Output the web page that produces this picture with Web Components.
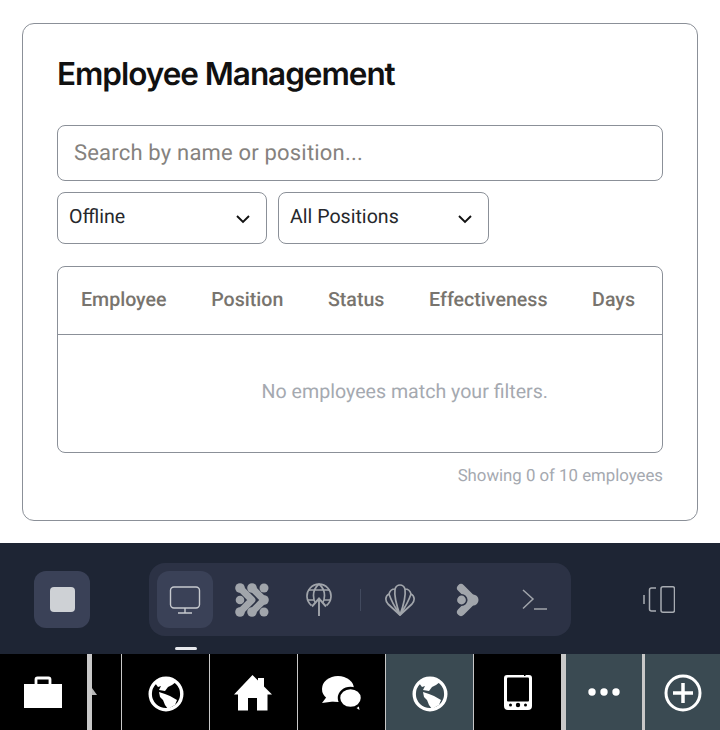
<!DOCTYPE html>
<html>
<head>
<meta charset="utf-8">
<style>
  html, body { margin: 0; padding: 0; background: #fff; }
  body { width: 720px; height: 730px; overflow: hidden; display: flex; flex-direction: column; font-family: Roboto, "Liberation Sans", sans-serif; text-rendering: geometricPrecision; }
</style>
</head>
<body>
<employee-panel></employee-panel>
<dock-bar></dock-bar>
<task-bar></task-bar>

<script>
class SelectBox extends HTMLElement {
  constructor() {
    super();
    this.attachShadow({ mode: "open" }).innerHTML = `
      <style>
        :host { display: flex; align-items: center; justify-content: space-between; box-sizing: border-box; width: 210px; height: 52px; padding: 0 15px 3px 11px; border: 1px solid #8b9098; border-radius: 8px; font-size: 19.6px; color: #26282c; }
        :host([wide]) { width: 211px; }
        svg { display: block; margin-top: 4px; }
      </style>
      <slot></slot>
      <svg width="16" height="10" viewBox="0 0 16 10"><path d="M2 2l6 6 6-6" fill="none" stroke="#111" stroke-width="1.9"/></svg>
    `;
  }
}

class EmployeeTable extends HTMLElement {
  constructor() {
    super();
    this.attachShadow({ mode: "open" }).innerHTML = `
      <style>
        :host { display: block; box-sizing: border-box; height: 187px; border: 1px solid #8b9098; border-radius: 8px; }
        .head { display: flex; justify-content: space-between; align-items: center; box-sizing: border-box; height: 68px; padding: 0 27px 2px 23px; border-bottom: 1px solid #8b9098; font-size: 19.6px; font-weight: 500; color: #78746e; }
        .empty { box-sizing: border-box; padding: 45px 114px 0 0; text-align: right; font-size: 19.6px; color: #a5a9b0; }
      </style>
      <div class="head"><span>Employee</span><span>Position</span><span>Status</span><span>Effectiveness</span><span>Days</span></div>
      <div class="empty">No employees match your filters.</div>
    `;
  }
}

class EmployeePanel extends HTMLElement {
  constructor() {
    super();
    this.attachShadow({ mode: "open" }).innerHTML = `
      <style>
        :host { display: block; box-sizing: border-box; height: 543px; padding: 23px 22px 22px; }
        .card { box-sizing: border-box; height: 498px; padding: 28px 34px 0; border: 1px solid #8b9098; border-radius: 12px; }
        h1 { margin: 0; font-family: Inter, Roboto, sans-serif; font-size: 31.5px; line-height: 44px; font-weight: 600; letter-spacing: -1.03px; color: #111; }
        .search { box-sizing: border-box; height: 56px; margin-top: 29px; padding: 0 16px; display: flex; align-items: center; border: 1px solid #8b9098; border-radius: 8px; font-size: 22px; letter-spacing: 0.19px; color: #85827e; }
        .filters { display: flex; gap: 11px; margin-top: 11px; }
        employee-table { margin-top: 22px; }
        .count { margin-top: 11px; text-align: right; font-size: 16.8px; line-height: 24px; color: #a5a9b0; }
      </style>
      <div class="card">
        <h1>Employee Management</h1>
        <div class="search">Search by name or position...</div>
        <div class="filters"><select-box>Offline</select-box><select-box wide>All Positions</select-box></div>
        <employee-table></employee-table>
        <div class="count">Showing 0 of 10 employees</div>
      </div>
    `;
  }
}

class DockBar extends HTMLElement {
  constructor() {
    super();
    this.attachShadow({ mode: "open" }).innerHTML = `
      <style>
        :host { display: flex; box-sizing: border-box; height: 111px; background: #1e2534; padding: 20px 45px 0 34px; position: relative; align-items: flex-start; }
        .tile { width: 56px; height: 57px; margin-top: 8px; border-radius: 12px; background: #3a4157; display: flex; align-items: center; justify-content: center; }
        .stop { width: 25px; height: 25px; border-radius: 4px; background: #ced1d5; }
        .group { display: flex; align-items: center; box-sizing: border-box; width: 422px; height: 73px; margin-left: 59px; padding: 0 8px; border-radius: 16px; background: #2c3245; }
        .item { width: 56px; height: 57px; display: flex; align-items: center; justify-content: center; margin-right: 11.4px; border-radius: 12px; }
        .item.on { background: #3a4157; }
        .item:last-child { margin-right: 0; }
        .sep { width: 1px; height: 22px; background: #424a5e; margin: 0 12px 0 1px; }
        .nudge { margin-right: 2px; }
        .right { margin-top: 23px; margin-left: auto; }
        svg { display: block; }
        .bar { position: absolute; left: 175px; top: 104px; width: 22px; height: 3px; border-radius: 2px; background: #e6e8ec; }
      </style>
      <div class="tile"><div class="stop"></div></div>
      <div class="group">
        <div class="item on">
          <svg width="32" height="28" viewBox="0 0 32 28" fill="none" stroke="#c6c9ce" stroke-width="1.4"><rect x="1.500" y="1" width="29" height="21" rx="3.500"/><path d="M16 22v5M9 27h14"/></svg>
        </div>
        <div class="item">
          <svg width="34" height="34" viewBox="0 0 34 34" fill="#a1a5ab"><circle cx="29" cy="5" r="4.500"/><circle cx="29" cy="29" r="4.500"/><circle cx="5" cy="17" r="4.300"/><path d="M5 5 17 17 5 29M17 5 29 17 17 29" fill="none" stroke="#a1a5ab" stroke-width="6.800" stroke-linejoin="round"/><circle cx="5" cy="5" r="4.800"/><circle cx="17" cy="5" r="4.800"/><circle cx="5" cy="29" r="4.800"/><circle cx="17" cy="29" r="4.800"/><circle cx="29" cy="17" r="4.800"/></svg>
        </div>
        <div class="item">
          <svg width="26" height="33" viewBox="0 0 26 33" fill="none" stroke="#a1a5ab" stroke-width="1.700"><path d="M5.500 22.500A12 12 0 1 1 20.500 22.500"/><path d="M13 1C9.500 4 7.500 8 7.500 12.500 7.500 15 8 18 9.500 20M13 1C16.500 4 18.500 8 18.500 12.500 18.500 15 18 18 16.500 20M2.500 7h21M1.500 17h7M17.500 17h7"/><path d="M13 15V33M6 23.500 13 15.500 20 23.500" stroke-width="1.900"/></svg>
        </div>
        <div class="sep"></div>
        <div class="item">
          <svg class="nudge" width="30" height="32" viewBox="0 0 30 32" fill="none" stroke="#a1a5ab" stroke-width="1.700" stroke-linejoin="round"><path d="M15 31 3 20C0 17 0 12 4 10 5 6 8 5 10 5 11 2 13 1 15 1S19 2 20 5C22 5 25 6 26 10 30 12 30 17 27 20Z"/><path d="M15 31C11 20 9 12 10 5M15 31C19 20 21 12 20 5M15 31C9 22 6 16 4 10M15 31C21 22 24 16 26 10"/></svg>
        </div>
        <div class="item">
          <svg width="23" height="34" viewBox="0 0 23 34" fill="#a1a5ab"><path d="M5 5 17 17 5 29" fill="none" stroke="#a1a5ab" stroke-width="8" stroke-linecap="round" stroke-linejoin="round"/><circle cx="17" cy="17" r="5.500"/><circle cx="5.500" cy="17" r="5.200" stroke="#2c3245" stroke-width="1.600"/></svg>
        </div>
        <div class="item">
          <svg class="nudge" width="25" height="21" viewBox="0 0 25 21" fill="none" stroke="#a1a5ab" stroke-width="1.500"><path d="M1 1l10 9-10 9.500M12 20h13"/></svg>
        </div>
      </div>
      <svg class="right" width="32" height="27" viewBox="0 0 32 27" fill="none" stroke="#a8acb2" stroke-width="1.500"><path d="M1 9v9"/><path d="M13 2H8.500Q6.500 2 6.500 4V23Q6.500 25 8.500 25H13"/><rect x="18" y="0.750" width="13.500" height="25.500" rx="2"/></svg>
      <div class="bar"></div>
    `;
  }
}

class TaskBar extends HTMLElement {
  constructor() {
    super();
    const globe = `<svg style="margin-top:4px" width="36" height="36" viewBox="0 0 36 36"><circle cx="18" cy="18" r="15.800" fill="none" stroke="#fff" stroke-width="3.400"/><path fill="#fff" d="M7 7 10 11 13 10 11 14 17 15 20 11 24 9 28 6 18 1Z"/><path fill="#fff" d="M11 16 17 18 22 20 29 24 27 29 20 33 17 29 15 24 12 21Z"/></svg>`;
    this.attachShadow({ mode: "open" }).innerHTML = `
      <style>
        :host { display: flex; height: 76px; background: #000; }
        .c { display: flex; align-items: center; justify-content: center; box-sizing: border-box; height: 76px; flex: none; }
        .slate { background: #3a4a52; }
        .thin { border-right: 1px solid #c8c8c8; }
        .thick { border-right: 5px solid #c8c8c8; }
        svg { display: block; }
      </style>
      <div class="c thick" style="width:92px">
        <svg style="margin-right:1px" width="38" height="32" viewBox="0 0 38 32" fill="#fff"><rect x="0" y="8" width="38" height="24"/><path d="M12 8V3.500Q12 2 13.500 2H24.500Q26 2 26 3.500V8" fill="none" stroke="#fff" stroke-width="2.800"/></svg>
      </div>
      <div class="c thin" style="width:30px;justify-content:flex-start">
        <svg width="5" height="8" viewBox="0 0 5 8" fill="#b8b8b8"><path d="M0 0 5 7H0Z"/></svg>
      </div>
      <div class="c thin" style="width:88px">${globe}</div>
      <div class="c thin" style="width:88px">
        <svg style="margin-top:1px;margin-right:2px" width="38" height="36" viewBox="0 0 38 36" fill="#fff"><path d="M18.500 0 24 5.500V3H30V11.500L38 19.500H33.500V35.500H23V23H14V35.500H4V19.500H0Z"/></svg>
      </div>
      <div class="c" style="width:87px">
        <svg style="margin-top:2px" width="40" height="34" viewBox="0 0 40 34" fill="#fff"><ellipse cx="16" cy="13" rx="16" ry="13"/><path d="M6 19 0 27 15 25Z"/><path d="M30 29 37.500 34 36 26Z"/><ellipse cx="28.500" cy="22" rx="11.500" ry="10" stroke="#000" stroke-width="2.500"/></svg>
      </div>
      <div class="c slate" style="width:89px;border-left:1px solid #c8c8c8;border-right:1px solid #c8c8c8">${globe}</div>
      <div class="c thick" style="width:92px">
        <svg width="30" height="37" viewBox="0 0 30 37" fill="none"><path fill="#fff" d="M4 1H21V2H22.500V1H26Q29 1 29 4V32Q29 36 25 36H5Q1 36 1 32V4Q1 1 4 1Z"/><rect x="4" y="3.500" width="22" height="24" rx="1" fill="#000"/><circle cx="7.500" cy="31" r="1.500" fill="#000"/><circle cx="15" cy="31" r="2.200" fill="#000"/><circle cx="22.500" cy="31" r="1.500" fill="#000"/></svg>
      </div>
      <div class="c slate" style="width:79px;border-right:3px solid #c8c8c8">
        <svg width="32" height="8" viewBox="0 0 32 8" fill="#fff"><circle cx="4" cy="4" r="3.700"/><circle cx="16" cy="4" r="3.700"/><circle cx="28" cy="4" r="3.700"/></svg>
      </div>
      <div class="c slate" style="width:75px">
        <svg style="margin-top:2px" width="38" height="38" viewBox="0 0 38 38" fill="none" stroke="#fff"><circle cx="19" cy="19" r="17" stroke-width="3"/><path d="M19 9v20M9 19h20" stroke-width="3.500"/></svg>
      </div>
    `;
  }
}

customElements.define("select-box", SelectBox);
customElements.define("employee-table", EmployeeTable);
customElements.define("employee-panel", EmployeePanel);
customElements.define("dock-bar", DockBar);
customElements.define("task-bar", TaskBar);
</script>
</body>
</html>
